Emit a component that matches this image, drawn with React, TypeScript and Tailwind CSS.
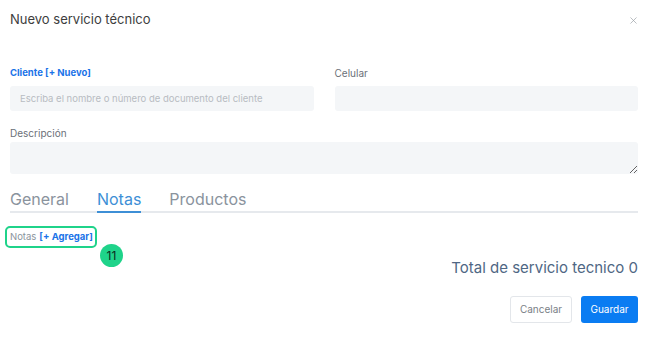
import * as React from "react"
import { X } from "lucide-react"

const font = { fontFamily: "Inter, 'Noto Sans', sans-serif" }

export default function App() {
  const [tab] = React.useState("Notas")

  return (
    <div className="w-[650px] h-[343px] bg-white overflow-hidden" style={font}>
      <div className="flex items-center justify-between pl-[10px] pr-[11px] pt-[10px] h-[30px]">
        <h1 className="text-[13px] text-[#3d3d3d]">Nuevo servicio técnico</h1>
        <X className="w-[11px] h-[11px] text-[#9aa0a6]" strokeWidth={1.5} />
      </div>

      <div className="pl-[10px] pr-[12px] pt-[36px]">
        <div className="grid grid-cols-2 gap-x-[21px]">
          <div>
            <label className="block text-[9.5px] font-bold text-[#1a73e8] leading-[14px] mb-[4px]">
              Cliente [+ Nuevo]
            </label>
            <input
              className="w-full h-[25px] rounded-[3px] bg-[#f4f6f8] px-[10px] text-[9.5px] text-[#444] placeholder:text-[#b8bcc2] outline-none"
              placeholder="Escriba el nombre o número de documento del cliente"
            />
          </div>
          <div>
            <label className="block text-[10px] text-[#6b7078] leading-[14px] mb-[4px]">Celular</label>
            <input className="w-full h-[25px] rounded-[3px] bg-[#f4f6f8] px-[10px] text-[10px] outline-none" />
          </div>
        </div>

        <label className="block text-[10px] text-[#6b7078] leading-[14px] mt-[15px] mb-[2px]">Descripción</label>
        <textarea className="block w-full h-[32px] rounded-[3px] bg-[#f4f6f8] px-[10px] text-[10px] outline-none" />

        <div className="flex gap-[28px] border-b-2 border-[#e6e9ed] mt-[14px]">
          {["General", "Notas", "Productos"].map((t) => (
            <div
              key={t}
              className={`text-[16px] leading-[22px] pb-[1px] -mb-[2px] border-b-2 ${
                t === tab ? "text-[#3d8fd6] border-[#3d8fd6]" : "text-[#8a939d] border-transparent"
              }`}
            >
              {t}
            </div>
          ))}
        </div>

        <div className="relative mt-[13px] h-[24px]">
          <div className="absolute -left-[5px] top-0 w-[92px] h-[22px] flex items-center pl-[3px] rounded-[5px] border-2 border-[#1fd38a] text-[9.5px] whitespace-nowrap">
            <span className="text-[#8a939d]">Notas</span>
            <span className="ml-[3px] font-bold text-[#1a73e8]">[+ Agregar]</span>
          </div>
          <div className="absolute left-[90px] top-[18px] w-[23px] h-[23px] rounded-full bg-[#1fd38a] flex items-center justify-center text-[12px] text-[#0b2a1c]">
            11
          </div>
        </div>

        <div className="text-right text-[15px] leading-[20px] text-[#4f6784] mt-[8px]">Total de servicio tecnico 0</div>

        <div className="flex justify-end gap-[9px] mt-[18px]">
          <button className="h-[27px] w-[62px] rounded-[3px] border border-[#e3e6ea] bg-white text-[10px] text-[#7a7f86]">
            Cancelar
          </button>
          <button className="h-[27px] w-[57px] rounded-[3px] bg-[#0a7cf2] text-[10px] text-white">Guardar</button>
        </div>
      </div>
    </div>
  )
}
